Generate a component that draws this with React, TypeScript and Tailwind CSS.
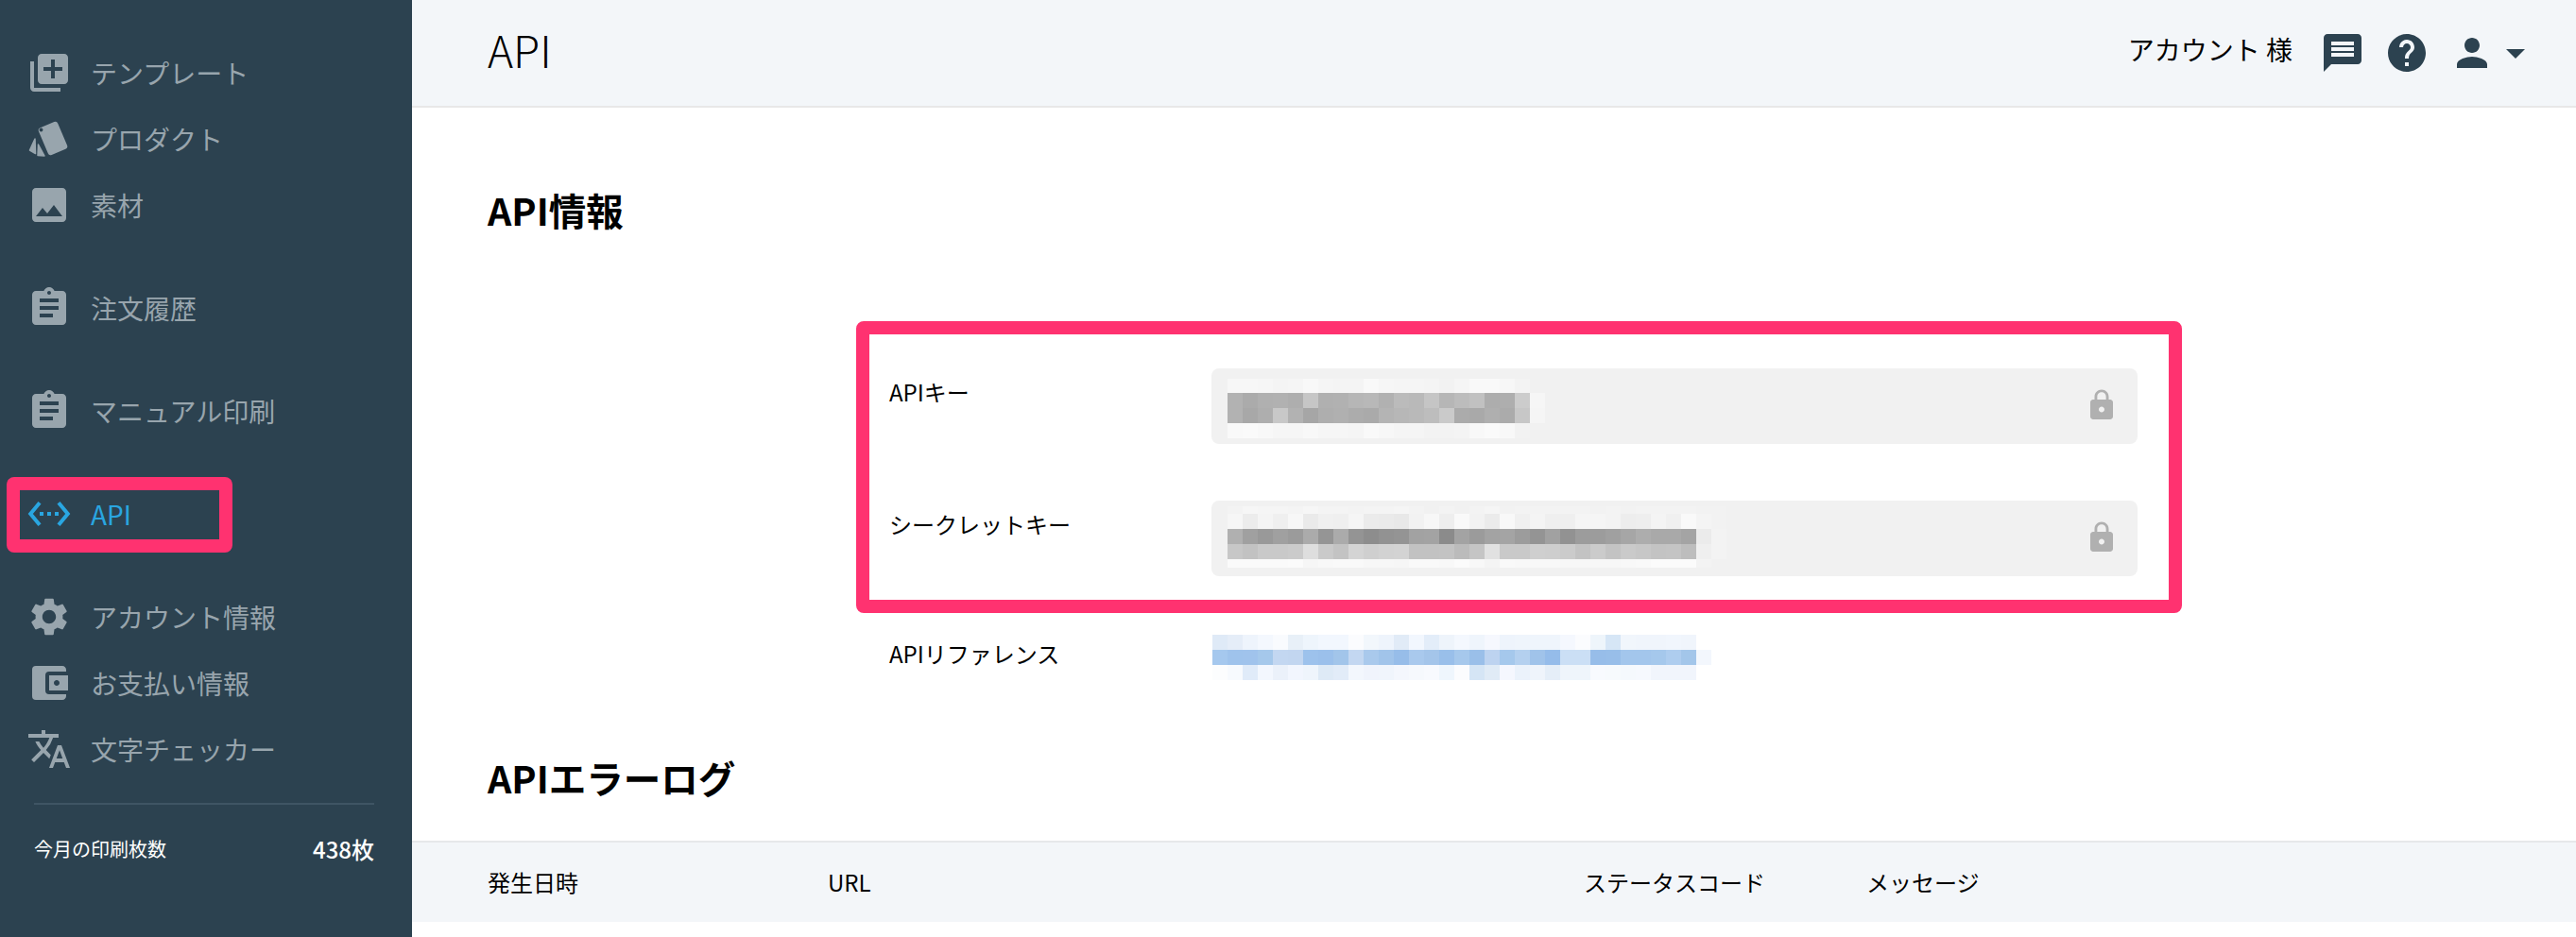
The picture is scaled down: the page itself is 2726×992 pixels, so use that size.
import type { ReactNode } from "react";
import {
	MdAccountBalanceWallet,
	MdArrowDropDown,
	MdAssignment,
	MdHelp,
	MdImage,
	MdLibraryAdd,
	MdLock,
	MdMessage,
	MdPerson,
	MdSettings,
	MdSettingsEthernet,
	MdTranslate,
} from "react-icons/md";

const CELL = 16;

// pixelated (blurred out) values, one string per row
const API_KEY = [
	"f7 f7 f6 f4 f5 f8 f5 f4 f4 f9 f6 f5 f5 f4 f2 f5 f9 f9 f7 f3 f1",
	"b2 ab b0 b1 ae c6 b0 b1 b6 b8 b1 bb b9 c5 b6 bc c1 ad ae cc f6",
	"b2 a8 ae c8 b2 a6 ae b0 ac aa b4 b7 b9 bd ca ab a9 af ab c7 f5",
	"f9 fa f8 f6 f6 f8 f6 f6 f5 f9 f7 f5 f5 f3 f3 f4 f8 fa f8 f2 f1",
];
const SECRET_KEY = [
	"f3 f6 f5 f5 f4 f6 f4 f4 f3 f4 f4 f5 f3 f1 f3 f1 f3 f5 f2 f3 f3 f3 f3 f3 f2 f3 f2 f3 f3 f3 f3 f2 f2",
	"f6 ec f4 ef f7 ea f0 ef f5 eb ea e8 f2 f7 ee f9 f2 eb f8 f0 f4 ef ef f5 f5 f3 ed ee f4 f0 f9 f4 f2",
	"b0 a0 99 a0 9b ab 95 ab 94 8d 92 94 a2 a3 8b a3 9b a3 a4 9c 94 a1 92 9c 9c a0 a6 ad a9 a9 a4 eb f3",
	"c7 c2 c9 c9 cb de ca c3 d4 cf d2 d3 c2 c2 c3 bb c5 e1 c9 c9 cf ce cb c3 cb c3 ca c7 c3 c4 bd ef f3",
	"fa fa fa fa fb f6 f8 f9 f9 f7 f7 f6 f9 f9 f8 fb f8 f4 f9 f8 f8 f8 f7 f7 f7 f7 f8 f9 fb fb fb f3 f1",
];
const REFERENCE = [
	"dfeaf7 e5edf8 eef4fc f4f8fe f9fbfe e8f0f8 eef5fc f2f7fe f2f7fe fbfcfe f2f7fc eef4fc e1ebf7 f2f7fe e3edf9 eef4fb f4f8fe eff5fc f6f8fe eef4fc eff5fc eff5fc eff5fc f5f8fe fbfcfe eef5fb d6e6f6 f1f6fc f0f5fc f0f5fc f1f6fd f0f5fc",
	"a5c8ee 9fc3ec a0c3ec a5c8eb c3d7f1 c2d6f0 9dc2ec 9bc0eb a2c5ea c3d7f1 a9c9ec a1c4ea 97bde9 a9c9ed a4c5ea 99bfea a6c8ec 9abfe9 bdd3f0 a5c8ec b4d0ef a0c3ea 95bcea cbdff5 cbdff5 97bde9 98bee9 a3c6ec a3c6ec a5c8ec aecdef a3c6ea f3f7fd",
	"fcfdfe f7fafe e0ebf9 f3f7fe ebf1fa f2f6fe eff5fc deeaf6 e2ecf8 f3f7fd f0f4fc f0f5fc f4f7fd f6f9fd f8fafe eff6fd fbfcfe d5e5f5 e0ebf6 f5f7fe ebf2fb eff4fb e5eef8 eff5fb eff5fb f8fafe f7fafd f5f9fd f6f9fe f1f5fc f1f5fc f1f5fc",
];

const toHex = (v: string) => (v.length === 2 ? `#${v}${v}${v}` : `#${v}`);

const Mosaic = ({
	rows,
	heights,
	className,
}: {
	rows: string[];
	heights: number[];
	className?: string;
}) => {
	const width = Math.max(...rows.map((r) => r.split(" ").length)) * CELL;
	const height = heights.reduce((a, b) => a + b, 0);
	let y = 0;
	return (
		<svg
			width={width}
			height={height}
			shapeRendering="crispEdges"
			className={className}
		>
			{rows.map((row, i) => {
				const top = y;
				y += heights[i];
				return row
					.split(" ")
					.map((v, j) => (
						<rect
							key={`${i}-${j}`}
							x={j * CELL}
							y={top}
							width={CELL}
							height={heights[i]}
							fill={toHex(v)}
						/>
					));
			})}
		</svg>
	);
};

const ProductIcon = () => (
	<svg width={48} height={48} viewBox="0 0 48 48" fill="currentColor">
		<rect
			x={17}
			y={8}
			width={22}
			height={31}
			rx={3}
			transform="rotate(-23 28 23.5)"
		/>
		<circle cx={15.5} cy={14.5} r={1.9} fill="#2c4250" />
		<path
			d="M9 24 L3.5 36 L9.5 39.5 Z"
			stroke="currentColor"
			strokeWidth={1.5}
			strokeLinejoin="round"
		/>
		<path
			d="M12.5 30 L12 41.5 L19 42 Z"
			stroke="currentColor"
			strokeWidth={1.5}
			strokeLinejoin="round"
		/>
	</svg>
);

const NavItem = ({
	icon,
	label,
	active,
	children,
}: {
	icon: ReactNode;
	label: string;
	active?: boolean;
	children?: ReactNode;
}) => (
	<div
		className={`relative flex h-[70px] items-center gap-[20px] pl-[28px] text-[28px] ${
			active ? "text-[#29a6e1]" : "text-[#98a5ad]"
		}`}
	>
		<span className="flex h-12 w-12 shrink-0 items-center justify-center">
			{icon}
		</span>
		<span>{label}</span>
		{children}
	</div>
);

const FormRow = ({
	label,
	children,
}: {
	label: string;
	children: ReactNode;
}) => (
	<div className="flex">
		<div className="w-[341px] pt-[7px] text-[24px] leading-[36px]">{label}</div>
		{children}
	</div>
);

const App = () => {
	return (
		<div className="flex h-screen w-full overflow-hidden bg-white font-['Noto_Sans_CJK_JP','Noto_Sans',sans-serif] text-black">
			<aside className="flex w-[436px] shrink-0 flex-col bg-[#2c4250] pt-[42px]">
				<NavItem icon={<MdLibraryAdd size={48} />} label="テンプレート" />
				<NavItem icon={<ProductIcon />} label="プロダクト" />
				<NavItem icon={<MdImage size={48} />} label="素材" />
				<div className="mt-[39px]">
					<NavItem icon={<MdAssignment size={48} />} label="注文履歴" />
				</div>
				<div className="mt-[39px]">
					<NavItem icon={<MdAssignment size={48} />} label="マニュアル印刷" />
				</div>
				<div className="mt-[39px]">
					<NavItem icon={<MdSettingsEthernet size={48} />} label="API" active>
						<div className="absolute left-[7px] top-[-4px] h-[80px] w-[239px] rounded-lg border-[14px] border-[#ff3270]" />
					</NavItem>
				</div>
				<div className="mt-[39px]">
					<NavItem icon={<MdSettings size={48} />} label="アカウント情報" />
				</div>
				<NavItem icon={<MdAccountBalanceWallet size={48} />} label="お支払い情報" />
				<NavItem icon={<MdTranslate size={48} />} label="文字チェッカー" />
				<div className="ml-[36px] mr-[40px] mt-[22px] h-[2px] bg-[#3f5564]" />
				<div className="ml-[36px] mr-[40px] mt-[29px] flex items-center justify-between text-white">
					<span className="text-[20px]">今月の印刷枚数</span>
					<span className="text-[24px] font-medium">438枚</span>
				</div>
			</aside>

			<main className="flex min-w-0 flex-1 flex-col">
				<header className="flex h-[114px] shrink-0 items-center border-b-2 border-[#e8e8e8] bg-[#f3f6f9] pl-[80px] pr-[40px]">
					<h1 className="mb-[7px] text-[46px] font-light">API</h1>
					<div className="ml-auto flex items-center text-[#2c4250]">
						<span className="mb-[8px] mr-[30px] text-[28px] text-black">アカウント 様</span>
						<MdMessage size={48} className="-ml-px" />
						<MdHelp size={48} className="ml-5" />
						<MdPerson size={48} className="ml-[21px]" />
						<MdArrowDropDown size={48} className="ml-[-2px]" />
					</div>
				</header>

				<section className="pl-[80px] pt-[78px]">
					<h2 className="text-[39.5px] font-bold leading-[60px]">API情報</h2>
				</section>

				<section className="relative mt-[138px] pl-[505px]">
					<div className="flex flex-col gap-[60px]">
						<FormRow label="APIキー">
							<div className="flex h-[80px] w-[980px] justify-between rounded-lg bg-[#f1f1f1] pl-[17px] pr-5">
								<Mosaic
									rows={API_KEY}
									heights={[15, 16, 16, 16]}
									className="mt-[11px]"
								/>
								<MdLock size={36} className="mt-[21px] text-[#b0b0b0]" />
							</div>
						</FormRow>
						<FormRow label="シークレットキー">
							<div className="flex h-[80px] w-[980px] justify-between rounded-lg bg-[#f1f1f1] pl-[17px] pr-5">
								<Mosaic
									rows={SECRET_KEY}
									heights={[8, 16, 16, 16, 9]}
									className="mt-[6px]"
								/>
								<MdLock size={36} className="mt-[21px] text-[#b0b0b0]" />
							</div>
						</FormRow>
					</div>
					<div className="mt-[62px] flex">
						<div className="w-[341px] text-[24px] leading-[40px]">APIリファレンス</div>
						<Mosaic
							rows={REFERENCE}
							heights={[16, 16, 16]}
							className="ml-px"
						/>
					</div>
					<div className="absolute left-[470px] top-[-50px] h-[309px] w-[1403px] rounded-lg border-[14px] border-[#ff3270]" />
				</section>

				<section className="pl-[80px] pt-[73px]">
					<h2 className="text-[39.5px] font-bold leading-[60px]">APIエラーログ</h2>
				</section>

				<div className="mt-[37px] flex h-[86px] shrink-0 items-center border-t-2 border-[#e6e8ea] bg-[#f3f6f9] pl-[80px] text-[24px]">
					<span className="w-[360px]">発生日時</span>
					<span className="w-[800px]">URL</span>
					<span className="w-[299px]">ステータスコード</span>
					<span>メッセージ</span>
				</div>
			</main>
		</div>
	);
};

export default App;
